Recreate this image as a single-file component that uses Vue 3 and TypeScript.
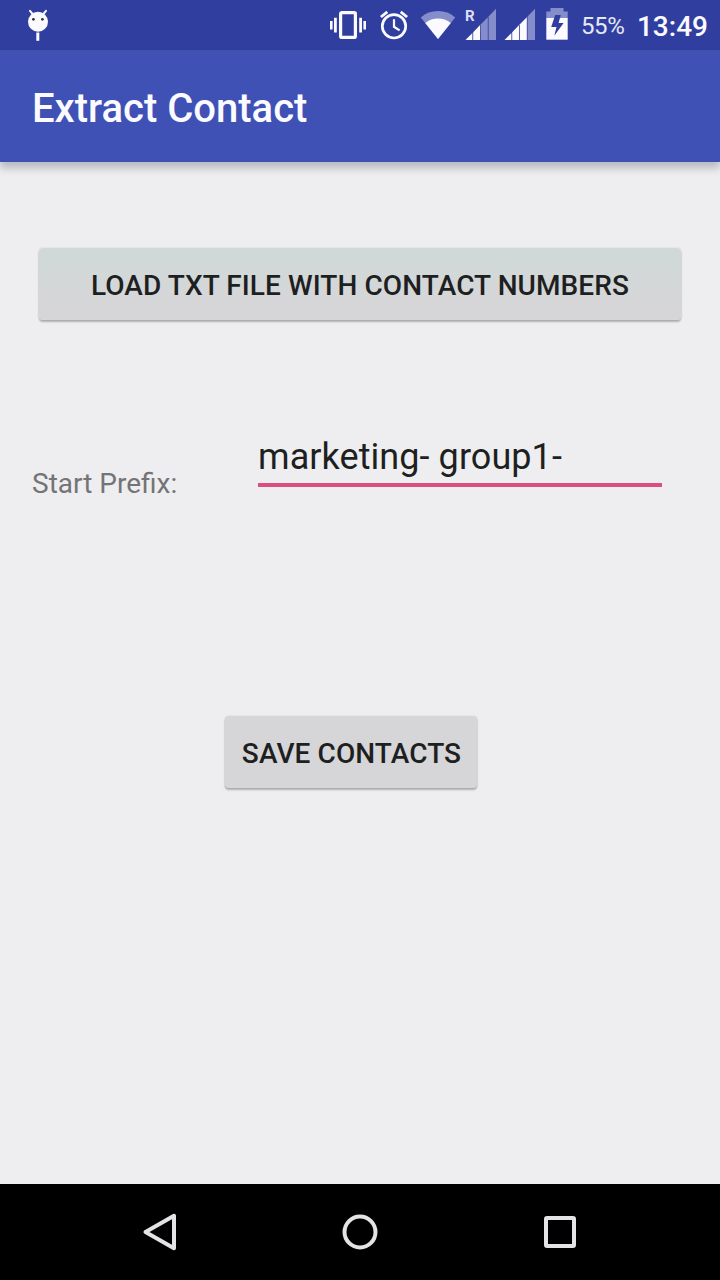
<script setup lang="ts">
import { ref } from 'vue'

const prefix = ref('marketing- group1-')
const battery = 55
const clock = '13:49'

const bars = [
  'M0.5 32 L7.4 25.1 V32 Z',
  'M8.2 24.3 L15.1 17.1 V32 H8.2 Z',
  'M15.9 16.3 L22.8 9.2 V32 H15.9 Z',
  'M23.6 8.4 L31 0.8 V32 H23.6 Z',
]
const signals = [
  { id: 1, level: 2, roaming: true },
  { id: 2, level: 3, roaming: false },
]
</script>

<template>
  <div class="screen">
    <header class="status">
      <svg class="bug" width="24" height="34" viewBox="0 0 24 34">
        <path d="M4 2.8 7 6.5M20 2.8 17 6.5" stroke="#fafaff" stroke-width="2" stroke-linecap="round" />
        <circle cx="12" cy="13.8" r="10" fill="#fafaff" />
        <rect x="10.3" y="24.5" width="3" height="8.3" fill="#fafaff" />
        <circle cx="7.4" cy="11.3" r="1.4" fill="#30343c" />
        <circle cx="16.4" cy="11.3" r="1.4" fill="#30343c" />
      </svg>

      <svg class="vibrate" width="36" height="28" viewBox="0 0 36 28">
        <rect x="10.6" y="1.6" width="14.8" height="24.8" rx="1.2" fill="none" stroke="#fafaff" stroke-width="3.2" />
        <path d="M0 10h2.6v8.4H0zM4 6.8h2.8v14.6H4zM29.2 6.8h2.8v14.6h-2.8zM33.4 10H36v8.4h-2.6z" fill="#fafaff" />
      </svg>

      <svg class="alarm" width="28" height="30" viewBox="0 0 28 30" fill="none" stroke="#fafaff">
        <circle cx="14" cy="16.3" r="11.7" stroke-width="2.7" />
        <path d="M14 9.3V16.8L19.6 20.4" stroke-width="2.2" />
        <path d="M0.9 7 7.3 1.8M27.1 7 20.7 1.8" stroke-width="2.8" />
      </svg>

      <svg class="wifi" width="36" height="30" viewBox="0 0 36 30">
        <path d="M18 29 0.8 7.4Q8.3 1 18 1T35.2 7.4Z" fill="#858dca" />
        <path d="M18 29 5.2 12.9Q11 8.6 18 8.6T30.8 12.9Z" fill="#fafaff" />
      </svg>

      <div v-for="s in signals" :key="s.id" class="signal" :class="{ second: !s.roaming }">
        <svg width="32" height="33" viewBox="0 0 32 33">
          <path v-for="(d, i) in bars" :key="i" :d="d" :fill="i < s.level ? '#fafaff' : '#858dca'" />
        </svg>
        <span v-if="s.roaming" class="roaming">R</span>
      </div>

      <svg class="battery" width="22" height="32" viewBox="0 0 22 32">
        <path d="M4.5 0h13v3.4h4.2v6.8H.3V3.4h4.2z" fill="#858dca" />
        <path d="M.3 10h21.4v21.7H.3z" fill="#fafaff" />
        <path d="M9.2 7h5.6l-2.2 8h5L8.3 27.7l2.2-8.6H5.2z" fill="#303f9f" />
      </svg>

      <span class="percent">{{ battery }}%</span>
      <span class="clock">{{ clock }}</span>
    </header>

    <div class="appbar"><h1>Extract Contact</h1></div>

    <main class="content">
      <button class="btn load" type="button">LOAD TXT FILE WITH CONTACT NUMBERS</button>
      <div class="row">
        <label for="prefix">Start Prefix:</label>
        <input id="prefix" v-model="prefix" type="text" spellcheck="false" />
      </div>
      <button class="btn save" type="button">SAVE CONTACTS</button>
    </main>

    <nav class="nav">
      <svg width="40" height="40" viewBox="0 0 40 40">
        <path d="M5.5 20 34 3.8V36.2Z" />
      </svg>
      <svg width="40" height="40" viewBox="0 0 40 40">
        <circle cx="20" cy="20" r="15.5" />
      </svg>
      <svg width="40" height="40" viewBox="0 0 40 40">
        <rect x="6" y="6" width="28" height="28" rx="1" />
      </svg>
    </nav>
  </div>
</template>

<style>
body {
  margin: 0;
}
</style>

<style scoped>
.screen {
  width: 720px;
  height: 1280px;
  display: flex;
  flex-direction: column;
  overflow: hidden;
  background: #eeeef0;
  font-family: Roboto, 'Noto Sans', sans-serif;
}
svg {
  display: block;
  flex: none;
}
.status {
  flex: none;
  height: 50px;
  box-sizing: border-box;
  padding: 0 12px 0 26px;
  display: flex;
  align-items: flex-start;
  background: #303f9f;
  color: #fafaff;
}
.bug {
  margin-top: 8px;
}
.vibrate {
  margin: 11px 0 0 280px;
}
.alarm {
  margin: 10px 0 0 14px;
}
.wifi {
  margin: 10px 0 0 12px;
}
.signal {
  position: relative;
  margin: 8px 0 0 9px;
}
.signal.second {
  margin-left: 7px;
}
.roaming {
  position: absolute;
  left: 0;
  top: 0;
  font-size: 15px;
  line-height: 17px;
  font-weight: 700;
  color: #dcdff5;
}
.battery {
  margin: 8px 0 0 10px;
}
.percent {
  margin-left: 13px;
  width: 44px;
  font-size: 24px;
  line-height: 52px;
  letter-spacing: -0.4px;
  color: #e6e8f6;
}
.clock {
  margin-left: 12px;
  font-size: 28px;
  line-height: 53px;
  font-weight: 500;
  white-space: nowrap;
}
.appbar {
  flex: none;
  position: relative;
  height: 112px;
  padding-left: 32px;
  display: flex;
  align-items: center;
  background: #3f51b5;
  box-shadow: 0 6px 8px rgba(40, 50, 70, 0.28);
}
h1 {
  margin: 6px 0 0;
  font-size: 40px;
  line-height: 48px;
  font-weight: 500;
  color: #fafaff;
}
.content {
  flex: 1;
  display: flex;
  flex-direction: column;
}
.btn {
  flex: none;
  height: 72px;
  padding: 4px 0 0;
  border: 0;
  border-radius: 4px;
  background: #d6d6d8;
  box-shadow: 0 2px 2px rgba(0, 0, 0, 0.26), 0 0 2px rgba(0, 0, 0, 0.12);
  color: #1e1f21;
  font: 500 28px/36px Roboto, sans-serif;
  letter-spacing: 0.09px;
  white-space: nowrap;
}
.load {
  margin: 86px 39px 0;
  background: linear-gradient(#d1d8d8 20%, #d6d6d8 75%);
}
.row {
  display: flex;
  align-items: flex-start;
  margin-top: 112px;
  height: 80px;
  padding-left: 32px;
}
label {
  width: 226px;
  margin-top: 34px;
  font-size: 28px;
  line-height: 36px;
  color: #747476;
}
input {
  box-sizing: border-box;
  width: 404px;
  height: 55px;
  padding: 0 0 2px;
  border: 0;
  border-bottom: 4px solid #d94f80;
  outline: 0;
  background: none;
  color: #1e1f21;
  font: 400 36px/44px Roboto, sans-serif;
  letter-spacing: 0.07px;
}
.save {
  width: 252px;
  margin: 204px 0 0 225px;
  padding-left: 1px;
}
.nav {
  flex: none;
  height: 96px;
  padding: 0 140px;
  display: flex;
  align-items: center;
  justify-content: space-between;
  background: #000;
}
.nav svg {
  fill: none;
  stroke: #e4e4e6;
  stroke-width: 4;
  stroke-linejoin: round;
}
</style>
